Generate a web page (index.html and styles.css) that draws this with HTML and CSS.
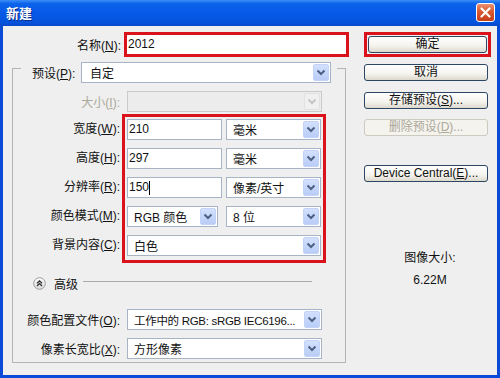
FILE: index.html
```html
<!DOCTYPE html>
<html lang="zh-CN">
<head>
    <meta charset="UTF-8">
    <title>新建</title>
    <link rel="stylesheet" href="styles.css">
</head>
<body>

    <div class="titlebar">
        <span class="title">新建</span>
        <span class="close">
            <svg width="11" height="11" viewBox="0 0 11 11"><path d="M1.5 1.5 L9.5 9.5 M9.5 1.5 L1.5 9.5" stroke="#fff" stroke-width="2.2" stroke-linecap="round"/></svg>
        </span>
    </div>

    <div class="frame">
        <div class="main">
            <div class="name-row">
                <span class="name-label">名称(<u>N</u>):</span>
                <div class="name-box">2012</div>
            </div>

            <div class="group">
                <div class="preset-row">
                    <span class="preset-label">预设(<u>P</u>):</span>
                    <div class="select preset">
                        <span class="text">自定</span>
                        <span class="arrow"><svg width="16" height="17" viewBox="0 0 16 17"><path d="M4.5 6.5 L8 10 L11.5 6.5" stroke="#4d6185" stroke-width="2" fill="none"/></svg></span>
                    </div>
                </div>

                <div class="row">
                    <span class="label disabled-text">大小(<u>I</u>):</span>
                    <div class="select wide disabled">
                        <span class="text"></span>
                        <span class="arrow"><svg width="16" height="17" viewBox="0 0 16 17"><path d="M4.5 6.5 L8 10 L11.5 6.5" stroke="#c4c4c4" stroke-width="2" fill="none"/></svg></span>
                    </div>
                </div>

                <div class="hl-wrap">
                    <div class="labels">
                        <span>宽度(<u>W</u>):</span>
                        <span>高度(<u>H</u>):</span>
                        <span>分辨率(<u>R</u>):</span>
                        <span>颜色模式(<u>M</u>):</span>
                        <span>背景内容(<u>C</u>):</span>
                    </div>
                    <div class="hl">
                        <div class="pair">
                            <div class="input">210</div>
                            <div class="select unit">
                                <span class="text">毫米</span>
                                <span class="arrow"><svg width="16" height="17" viewBox="0 0 16 17"><path d="M4.5 6.5 L8 10 L11.5 6.5" stroke="#4d6185" stroke-width="2" fill="none"/></svg></span>
                            </div>
                        </div>
                        <div class="pair">
                            <div class="input">297</div>
                            <div class="select unit">
                                <span class="text">毫米</span>
                                <span class="arrow"><svg width="16" height="17" viewBox="0 0 16 17"><path d="M4.5 6.5 L8 10 L11.5 6.5" stroke="#4d6185" stroke-width="2" fill="none"/></svg></span>
                            </div>
                        </div>
                        <div class="pair">
                            <div class="input">150<span class="caret"></span></div>
                            <div class="select unit">
                                <span class="text">像素/英寸</span>
                                <span class="arrow"><svg width="16" height="17" viewBox="0 0 16 17"><path d="M4.5 6.5 L8 10 L11.5 6.5" stroke="#4d6185" stroke-width="2" fill="none"/></svg></span>
                            </div>
                        </div>
                        <div class="pair">
                            <div class="select mode">
                                <span class="text">RGB 颜色</span>
                                <span class="arrow"><svg width="16" height="17" viewBox="0 0 16 17"><path d="M4.5 6.5 L8 10 L11.5 6.5" stroke="#4d6185" stroke-width="2" fill="none"/></svg></span>
                            </div>
                            <div class="select unit">
                                <span class="text">8 位</span>
                                <span class="arrow"><svg width="16" height="17" viewBox="0 0 16 17"><path d="M4.5 6.5 L8 10 L11.5 6.5" stroke="#4d6185" stroke-width="2" fill="none"/></svg></span>
                            </div>
                        </div>
                        <div class="select full">
                            <span class="text">白色</span>
                            <span class="arrow"><svg width="16" height="17" viewBox="0 0 16 17"><path d="M4.5 6.5 L8 10 L11.5 6.5" stroke="#4d6185" stroke-width="2" fill="none"/></svg></span>
                        </div>
                    </div>
                </div>

                <div class="advanced">
                    <svg class="adv-icon" width="13" height="13" viewBox="0 0 13 13">
                        <defs>
                            <linearGradient id="advBg" x1="0" y1="0" x2="0" y2="1">
                                <stop offset="0" stop-color="#ffffff"/>
                                <stop offset="1" stop-color="#d8d8d8"/>
                            </linearGradient>
                        </defs>
                        <circle cx="6.5" cy="6.5" r="5.8" fill="url(#advBg)" stroke="#9c9c9c"/>
                        <path d="M4 6.3 L6.5 3.8 L9 6.3 M4 9 L6.5 6.5 L9 9" stroke="#333" stroke-width="1.3" fill="none"/>
                    </svg>
                    <span class="adv-text">高级</span>
                    <span class="adv-line"></span>
                </div>

                <div class="row profile">
                    <span class="label">颜色配置文件(<u>O</u>):</span>
                    <div class="select wide">
                        <span class="text narrow">工作中的 RGB: sRGB IEC6196...</span>
                        <span class="arrow"><svg width="16" height="17" viewBox="0 0 16 17"><path d="M4.5 6.5 L8 10 L11.5 6.5" stroke="#4d6185" stroke-width="2" fill="none"/></svg></span>
                    </div>
                </div>

                <div class="row">
                    <span class="label">像素长宽比(<u>X</u>):</span>
                    <div class="select wide">
                        <span class="text">方形像素</span>
                        <span class="arrow"><svg width="16" height="17" viewBox="0 0 16 17"><path d="M4.5 6.5 L8 10 L11.5 6.5" stroke="#4d6185" stroke-width="2" fill="none"/></svg></span>
                    </div>
                </div>
            </div>
        </div>

        <div class="side">
            <div class="ok-box"><div class="btn ok">确定</div></div>
            <div class="btn cancel">取消</div>
            <div class="btn save">存储预设(<u>S</u>)...</div>
            <div class="btn delete disabled">删除预设(<u>D</u>)...</div>
            <div class="btn device">Device Central(<u>E</u>)...</div>

            <div class="size-info">
                <div>图像大小:</div>
                <div class="size-value">6.22M</div>
            </div>
        </div>
    </div>

</body>
</html>
```

FILE: styles.css
```css
* {
    box-sizing: border-box;
}
body {
    margin: 0;
    width: 500px;
    height: 378px;
    font-family: "Liberation Sans", "Noto Sans CJK SC", sans-serif;
    font-size: 12px;
    color: #111;
    display: flex;
    flex-direction: column;
    overflow: hidden;
}
u {
    text-decoration: underline;
}

/* title bar */
.titlebar {
    height: 26px;
    flex-shrink: 0;
    display: flex;
    align-items: center;
    justify-content: space-between;
    padding: 0 5px 1px 6px;
    background: linear-gradient(180deg, #3d8ef6 0%, #0c63ea 14%, #0659e8 50%, #0553dd 85%, #0849c9 100%);
}
.title {
    color: #fff;
    font-size: 13px;
    font-weight: bold;
    font-family: "Noto Sans CJK SC", sans-serif;
    text-shadow: 1px 1px 0 #0a2c8a;
}
.close {
    width: 19px;
    height: 19px;
    border: 1px solid #fff;
    border-radius: 3px;
    background: linear-gradient(180deg, #e99172 0%, #d9582f 45%, #c73d16 100%);
    display: flex;
    align-items: center;
    justify-content: center;
}

/* window body */
.frame {
    flex: 1;
    display: flex;
    background: #efefef;
    border: 3px solid #0a4ad6;
    border-top: none;
}
.main {
    width: 361px;
    flex-shrink: 0;
}
.name-row {
    display: flex;
    align-items: center;
    margin-top: 6px;
}
.name-label {
    width: 118px;
    margin-right: 3px;
    text-align: right;
}
.name-box {
    width: 225px;
    height: 25px;
    border: 3px solid #d9121b;
    background: #fff;
    padding-left: 1px;
    line-height: 19px;
}

/* group box */
.group {
    width: 334px;
    margin: 11px 0 0 9px;
    border: 1px solid #b4b4b4;
    padding-bottom: 3px;
}
.preset-row {
    display: flex;
    align-items: center;
    width: 316px;
    margin: -7px 0 0 8px;
    padding: 0 6px 0 11px;
    background: #efefef;
}
.preset-label {
    width: 45px;
    margin-right: 4px;
}
.row {
    display: flex;
    align-items: center;
    margin-top: 8px;
}
.row.profile {
    margin-top: 19px;
}
.label {
    width: 107px;
    margin-right: 7px;
    text-align: right;
    white-space: nowrap;
}
.disabled-text {
    color: #aca899;
}

/* highlighted fields */
.hl-wrap {
    display: flex;
    margin-top: 2px;
}
.labels {
    width: 107px;
    margin-right: 2px;
    padding-top: 5px;
    display: flex;
    flex-direction: column;
    gap: 8px;
    text-align: right;
}
.labels span {
    height: 21px;
    line-height: 21px;
}
.hl {
    width: 204px;
    border: 3px solid #d9121b;
    padding: 2px 2px 4px 2px;
    display: flex;
    flex-direction: column;
    gap: 8px;
}
.pair {
    display: flex;
    justify-content: space-between;
}

/* controls */
.input {
    width: 95px;
    height: 21px;
    border: 1px solid #a7b4c6;
    background: #fff;
    padding-left: 1px;
    line-height: 19px;
    display: flex;
    align-items: center;
}
.caret {
    width: 1px;
    height: 14px;
    background: #000;
}
.select {
    height: 21px;
    border: 1px solid #a7b4c6;
    background: #fff;
    display: flex;
    align-items: center;
    padding-left: 6px;
}
.select .text {
    white-space: nowrap;
}
.select .text.narrow {
    font-size: 11.5px;
    letter-spacing: -0.3px;
}
.select .arrow {
    margin-left: auto;
    margin-right: 1px;
    width: 16px;
    height: 17px;
    flex-shrink: 0;
    border: 1px solid #c3d3f7;
    border-radius: 2px;
    background: linear-gradient(180deg, #d3e0fd 0%, #b9cdf7 100%);
    display: flex;
}
.select .arrow svg {
    margin: -1px;
}
.select.preset {
    width: 250px;
    padding-left: 8px;
}
.select.wide {
    width: 195px;
}
.select.unit {
    width: 95px;
}
.select.mode {
    width: 91px;
}
.select.full {
    width: 194px;
}
.select.disabled {
    background: #ececec;
    border-color: #cacaca;
}
.select.disabled .arrow {
    background: #f0f0f0;
    border-color: #e2e2e2;
}

/* advanced */
.advanced {
    display: flex;
    align-items: center;
    height: 14px;
    margin-top: 13px;
    padding-left: 20px;
}
.adv-icon {
    flex-shrink: 0;
}
.adv-text {
    margin-left: 8px;
}
.adv-line {
    width: 229px;
    height: 1px;
    margin-left: 5px;
    margin-top: -3px;
    background: #a9a9a9;
}

/* right column */
.side {
    width: 133px;
}
.ok-box {
    width: 127px;
    height: 25px;
    margin-top: 6px;
    border: 3px solid #d9121b;
    padding: 1px;
}
.btn {
    width: 124px;
    height: 17px;
    border: 1px solid #2c4664;
    border-radius: 3px;
    background: linear-gradient(180deg, #ffffff 0%, #f4f3ee 60%, #dcd8cc 100%);
    text-align: center;
    line-height: 15px;
    white-space: nowrap;
}
.btn.ok {
    width: 119px;
}
.cancel {
    margin-top: 7px;
}
.save {
    margin-top: 11px;
}
.delete {
    margin-top: 10px;
}
.device {
    margin-top: 29px;
}
.btn.disabled {
    border-color: #cdcbbf;
    background: #f4f3ee;
    color: #aca899;
}
.size-info {
    width: 132px;
    margin-top: 69px;
    text-align: center;
    line-height: 14px;
}
.size-value {
    margin-top: 8px;
}
```
